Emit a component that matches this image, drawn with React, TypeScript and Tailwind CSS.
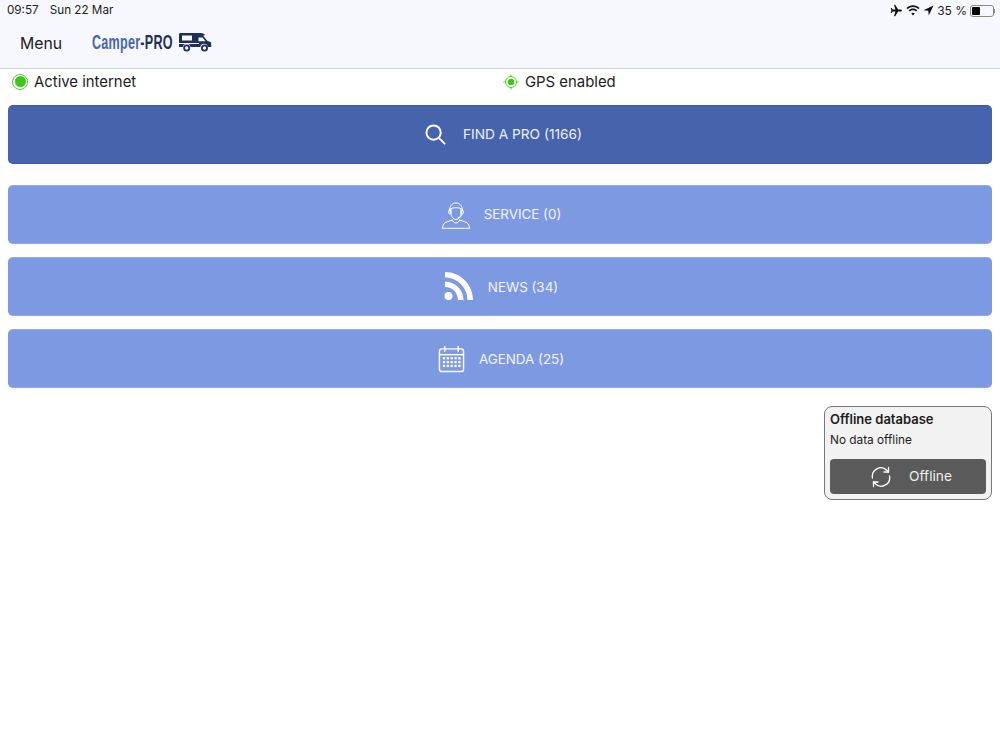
import React from 'react';

const font = { fontFamily: 'Inter, "Liberation Sans", sans-serif' };

const PlaneIcon = () => (
  <svg width="13" height="13" viewBox="0 0 24 24" fill="#111">
    <path d="M22 12c0-1.200-1-2-2.200-2H15L9.600 1.500H7.400L10 10H5L3.200 7.600H1.400L2.600 12 1.400 16.400h1.800L5 14h5L7.400 22.500h2.200L15 14h4.800C21 14 22 13.200 22 12z" />
  </svg>
);

const WifiIcon = () => (
  <svg width="14" height="11" viewBox="0 0 24 18" fill="#111">
    <path d="M12 3.200c3.500 0 6.700 1.300 9.200 3.500l2-2.200C20.100 1.700 16.200 0 12 0S3.900 1.700.800 4.500l2 2.200C5.300 4.500 8.500 3.200 12 3.200z" />
    <path d="M12 8.700c2 0 3.900.8 5.300 2l2.100-2.300C17.400 6.600 14.800 5.500 12 5.500S6.600 6.600 4.600 8.400l2.100 2.300c1.400-1.200 3.300-2 5.300-2z" />
    <path d="M12 13c-1.200 0-2.200.4-3 1.100l3 3.400 3-3.400c-.8-.7-1.800-1.100-3-1.100z" />
  </svg>
);

const ArrowIcon = () => (
  <svg width="11" height="11" viewBox="0 0 24 24" fill="#111">
    <path d="M23 1 1 11.500l10.500 1L12.500 23z" />
  </svg>
);

const CamperIcon = () => (
  <svg width="34" height="20" viewBox="0 0 34 20">
    <path fill="#1f2f56" d="M1 2.500C1 1.600 1.600 1 2.500 1H21c3 0 4.500.3 5.500 1.300.4.500.2 1-.4 1.100L25 3.600l4.200 5.200 3.200 1.300c.5.200.8.700.8 1.200V15h-3.400a3.800 3.800 0 0 0-7.500 0H12.400a3.800 3.800 0 0 0-7.500 0H1z" />
    <rect x="4" y="3.500" width="10" height="5" fill="#f7f8fd" />
    <path fill="#f7f8fd" d="M20.500 5.500h4l3 3.800h-7z" />
    <circle cx="8.700" cy="16" r="2.600" fill="#f7f8fd" stroke="#1f2f56" strokeWidth="1.800" />
    <circle cx="26.500" cy="16" r="2.600" fill="#f7f8fd" stroke="#1f2f56" strokeWidth="1.800" />
    <rect x="1" y="11" width="20" height="1" fill="#f7f8fd" />
  </svg>
);

const SearchIcon = () => (
  <svg width="21" height="21" viewBox="0 0 22 22" fill="none" stroke="white" strokeWidth="2" strokeLinecap="round">
    <circle cx="9" cy="9" r="7.500" />
    <path d="m14.500 14.500 6 6" />
  </svg>
);

const AgentIcon = () => (
  <svg width="30" height="30" viewBox="0 0 30 30" fill="none" stroke="white" strokeWidth="1" strokeLinecap="round">
    <path d="M8.500 11c0-5 2.500-8 6.500-8s6.500 3 6.500 8" />
    <path d="M9 9.500c2-2.500 10-2.500 12 0" />
    <path d="M10 9v4c0 3.500 2.500 6.500 5 6.500s5-3 5-6.500V9" />
    <rect x="7.800" y="9.500" width="2" height="4.500" rx="1" />
    <rect x="20.200" y="9.500" width="2" height="4.500" rx="1" />
    <path d="M21 14c0 2-1.500 3.500-4 3.700" />
    <path d="M1.500 28c.3-3.600 1.800-5.400 5-6.300l5-1.700M28.500 28c-.3-3.600-1.800-5.400-5-6.300l-5-1.700" />
    <path d="M11.500 20.500c1 1.700 2.200 2.500 3.500 2.500s2.500-.8 3.500-2.500" />
    <path d="M1.500 28.300h27" />
  </svg>
);

const RssIcon = () => (
  <svg width="29" height="29" viewBox="0 0 29 29" fill="white">
    <circle cx="4.500" cy="24" r="4" />
    <path d="M1 9.500v5.500c7.200 0 13 5.800 13 13h5.500C19.500 17.800 11.200 9.500 1 9.500z" />
    <path d="M1 0v5.500C13.400 5.500 23.500 15.600 23.500 28H29C29 12.500 16.500 0 1 0z" />
  </svg>
);

const CalendarIcon = () => (
  <svg width="27" height="28" viewBox="0 0 28 28" fill="none" stroke="white">
    <rect x="1.500" y="3.500" width="25" height="23.500" rx="2.500" strokeWidth="1.500" />
    <path d="M1.500 9.500h25" strokeWidth="1.500" />
    <path d="M7 1v5M21 1v5" strokeWidth="1.500" strokeLinecap="round" />
    <g fill="white" stroke="none">
      {[12, 16, 20].map(y =>
        [5, 9, 13, 17, 21].map(x => <rect key={`${x}-${y}`} x={x} y={y} width="2.400" height="2.400" />)
      )}
    </g>
  </svg>
);

const SyncIcon = () => (
  <svg width="22" height="22" viewBox="0 0 22 22" fill="none" stroke="white" strokeWidth="1.300" strokeLinecap="round" strokeLinejoin="round">
    <path d="M2.500 12A8.500 8.500 0 0 1 17 4.500l1.500 1.500" />
    <path d="M19.500 10A8.500 8.500 0 0 1 5 17.500L3.500 16" />
    <path d="M18.500 1.500V6H14" />
    <path d="M3.500 20.500V16H8" />
  </svg>
);

interface MenuButtonProps {
  icon: React.ReactNode;
  label: string;
  gap: string;
  labelClass?: string;
}

const MenuButton = ({ icon, label, gap, labelClass }: MenuButtonProps) => (
  <div className={`h-[59px] rounded-[5px] bg-[#7d99e2] border-y border-[#93aae8] flex items-center justify-center pl-[2px] text-[13.4px] text-white/90 ${gap}`}>
    {icon}
    <span className={labelClass}>{label}</span>
  </div>
);

const App = () => {
  return (
    <div className="w-[1000px] h-[750px] bg-white overflow-hidden text-[#1c1c1c]" style={font}>
      <div className="h-[69px] bg-[#f7f8fd] border-b border-[#d4d4d6]">
        <div className="h-[21px] flex items-center justify-between pl-[7px] pr-[5px] text-[11.7px]">
          <div className="flex gap-[11px]">
            <span>09:57</span>
            <span>Sun 22 Mar</span>
          </div>
          <div className="flex items-center gap-[3px]">
            <PlaneIcon />
            <WifiIcon />
            <ArrowIcon />
            <span className="text-[12px]">35 %</span>
            <div className="flex items-center">
              <div className="w-[24px] h-[12px] rounded-[3px] border border-[#888] p-[1px]">
                <div className="w-[8px] h-full bg-black rounded-[1px]" />
              </div>
              <div className="w-[1px] h-[4px] bg-[#888]" />
            </div>
          </div>
        </div>
        <div className="flex items-center h-[47px] pl-[20px]">
          <span className="text-[15.800px] w-[72px] mt-[-2px]">Menu</span>
          <div className="flex items-center gap-[5px] mt-[-5px]">
            <div className="w-[81px] whitespace-nowrap">
              <span className="inline-block origin-left scale-x-[0.6] text-[21px] font-bold tracking-[0.4px]" style={{ fontFamily: '"Liberation Sans", sans-serif' }}>
                <span className="text-[#4a66a9]">Camper</span>
                <span className="text-[#1f2f56]">-PRO</span>
              </span>
            </div>
            <CamperIcon />
          </div>
        </div>
      </div>

      <div className="px-2">
        <div className="h-[36px] pb-[10px] grid grid-cols-2 items-center text-[14.900px]">
          <div className="flex items-center gap-[6px] pl-[4px]">
            <div className="w-[16px] h-[16px] rounded-full border border-[#55cf2c] p-[1.500px]">
              <div className="w-full h-full rounded-full bg-[#3fc51a]" />
            </div>
            <span>Active internet</span>
          </div>
          <div className="flex items-center gap-[6px] pl-[3px]">
            <svg width="16" height="16" viewBox="0 0 16 16" fill="none">
              <circle cx="8" cy="8" r="5.500" stroke="#55cf2c" />
              <circle cx="8" cy="8" r="3.300" fill="#3fc51a" />
              <path d="M8 .5v2.500M8 13v2.500M.5 8H3M13 8h2.500" stroke="#55cf2c" />
            </svg>
            <span>GPS enabled</span>
          </div>
        </div>

        <div className="h-[59px] rounded-[5px] bg-[#4663ab] border-y border-[#3f5ca3] flex items-center justify-center gap-[17px] pl-[7px] text-[13.700px] text-white/90">
          <SearchIcon />
          <span>FIND A PRO (1166)</span>
        </div>

        <div className="mt-[21px] flex flex-col gap-[13px]">
          <MenuButton icon={<AgentIcon />} label="SERVICE (0)" gap="gap-[13px]" />
          <MenuButton icon={<RssIcon />} label="NEWS (34)" gap="gap-[15px]" labelClass="pt-[1px]" />
          <MenuButton icon={<CalendarIcon />} label="AGENDA (25)" gap="gap-[14px]" labelClass="pt-[1px]" />
        </div>

        <div className="flex justify-end mt-[18px]">
          <div className="w-[168px] h-[94px] rounded-lg bg-[#f2f2f2] border border-[#777] px-[5px] pt-[4px]">
            <div className="text-[13px] font-semibold leading-[16px]">Offline database</div>
            <div className="text-[11.800px] leading-[15px] mt-[6px]">No data offline</div>
            <div className="h-[35px] mt-[11px] pl-[6px] rounded bg-[#5a5a5a] flex items-center justify-center gap-[17px] text-[13.700px] text-white/90">
              <SyncIcon />
              <span>Offline</span>
            </div>
          </div>
        </div>
      </div>
    </div>
  );
};

export default App;
